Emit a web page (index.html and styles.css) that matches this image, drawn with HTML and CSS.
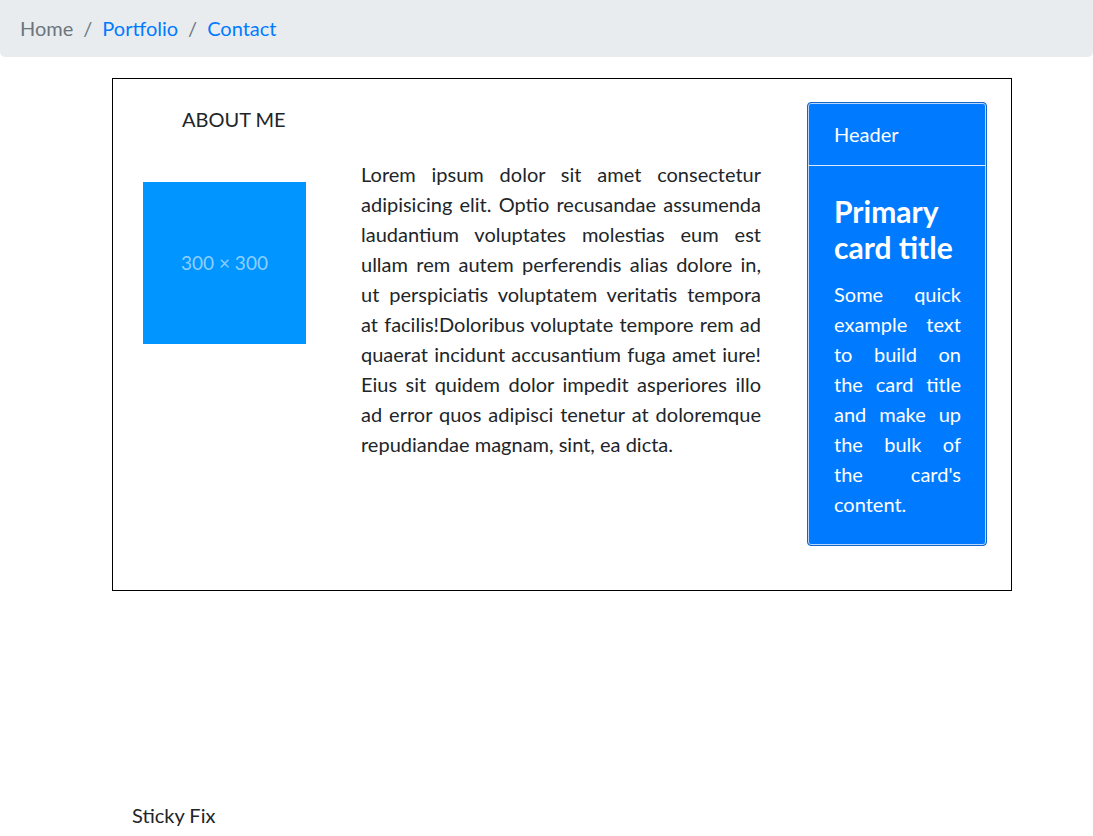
FILE: index.html
```html
<!DOCTYPE html>
<html lang="en">
<head>
<meta charset="utf-8">
<title>About</title>
<link rel="stylesheet" href="styles.css">
</head>
<body>
<nav class="breadcrumb">
  <span class="crumb crumb-active">Home</span>
  <span class="sep">/</span>
  <a class="crumb" href="#">Portfolio</a>
  <span class="sep">/</span>
  <a class="crumb" href="#">Contact</a>
</nav>

<main class="box">
  <div class="col-left">
    <h2 class="about-title">ABOUT ME</h2>
    <div class="placeholder">300 × 300</div>
  </div>
  <p class="about-text">Lorem ipsum dolor sit amet consectetur adipisicing elit. Optio recusandae assumenda laudantium voluptates molestias eum est ullam rem autem perferendis alias dolore in, ut perspiciatis voluptatem veritatis tempora at facilis!Doloribus voluptate tempore rem ad quaerat incidunt accusantium fuga amet iure! Eius sit quidem dolor impedit asperiores illo ad error quos adipisci tenetur at doloremque repudiandae magnam, sint, ea dicta.</p>
  <div class="card">
    <div class="card-header">Header</div>
    <div class="card-body">
      <h4 class="card-title">Primary card title</h4>
      <p class="card-text">Some quick example text to build on the card title and make up the bulk of the card's content.</p>
    </div>
  </div>
</main>

<footer class="sticky">Sticky Fix</footer>
</body>
</html>
```

FILE: styles.css
```css
html, body {
  margin: 0;
  padding: 0;
}
body {
  font-family: Lato, "Liberation Sans", sans-serif;
  font-size: 20px;
  line-height: 1.5;
  color: #212529;
  background: #fff;
  width: 1093px;
  height: 836px;
  overflow: hidden;
  position: relative;
}
.breadcrumb {
  display: flex;
  align-items: center;
  height: 57px;
  padding: 0 20px 2px;
  background: #e9ecef;
  border-radius: 0 0 5px 5px;
  box-sizing: border-box;
}
.crumb {
  color: #007bff;
  text-decoration: none;
}
.crumb-active {
  color: #6c757d;
}
.sep {
  color: #6c757d;
  padding: 0 10px;
}
.box {
  margin: 21px 0 0 112px;
  width: 900px;
  height: 513px;
  box-sizing: border-box;
  border: 1px solid #000;
  display: flex;
  align-items: flex-start;
}
.col-left {
  width: 164px;
  margin-left: 30px;
  margin-top: 25px;
}
.about-title {
  margin: 0 0 48px 39px;
  font-size: 20px;
  font-weight: 400;
  line-height: 30px;
}
.placeholder {
  width: 163px;
  height: 162px;
  background: #0095ff;
  color: #8ccfff;
  font-size: 19px;
  display: flex;
  align-items: center;
  justify-content: center;
}
.about-text {
  width: 400px;
  margin: 80px 0 0 54px;
  text-align: justify;
  line-height: 30px;
}
.card {
  width: 180px;
  margin: 23px 0 0 46px;
  box-sizing: border-box;
  background: #007bff;
  border: 1px solid #1466c8;
  box-shadow: inset 0 0 0 1px #b9d7fb;
  border-radius: 4px;
  color: #fff;
}
.card-header {
  height: 63px;
  box-sizing: border-box;
  padding: 16px 26px;
  line-height: 30px;
  border-bottom: 1px solid #d8e8fd;
  border-radius: 4px 4px 0 0;
}
.card-body {
  padding: 27px 25px 26px 26px;
}
.card-title {
  margin: 0 0 14px;
  font-size: 30px;
  font-weight: 700;
  line-height: 36px;
}
.card-text {
  margin: 0;
  text-align: justify;
  line-height: 30px;
}
.sticky {
  position: absolute;
  left: 132px;
  top: 800px;
  line-height: 30px;
}
```
